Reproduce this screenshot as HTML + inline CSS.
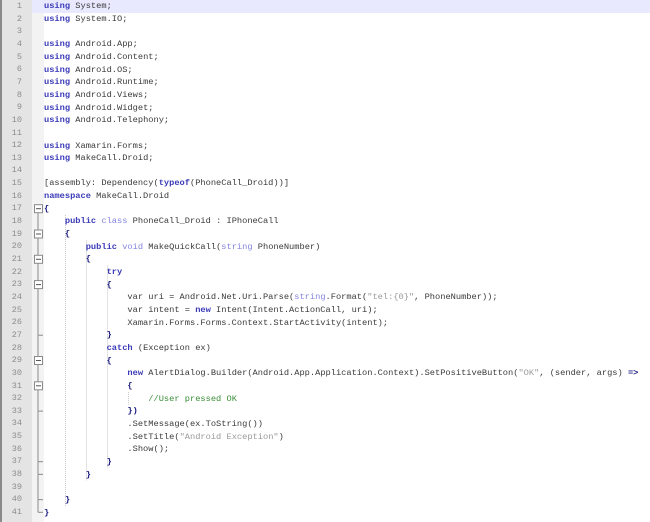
<!DOCTYPE html>
<html><head><meta charset="utf-8"><style>
html,body{margin:0;padding:0;width:650px;height:522px;overflow:hidden;background:#fff;}
#g{position:absolute;left:0;top:0;width:30px;height:522px;background:#e4e4e4;border-left:2px solid #8a8a8a;}
#f{position:absolute;left:32px;top:0;width:12px;height:522px;background:#f3f3f3;}
#hl{position:absolute;left:32px;top:0;width:618px;height:12.65px;background:#e8e8ff;}
.ln{position:absolute;left:2px;width:20px;text-align:right;font:8.5px "Liberation Mono",monospace;color:#8c8c8c;line-height:12.65px;}
pre{position:absolute;left:44px;top:0.3px;margin:0;font:8.7px "Liberation Mono",monospace;line-height:12.65px;color:#3a3a3a;}
.k{color:#3a3ab8;font-weight:bold}
.t{color:#8585e0}
.o{color:#1a1a80;font-weight:bold}
.s{color:#9a9a9a}
.c{color:#3a8f3a}
svg{position:absolute;left:0;top:0}
</style></head><body>
<div id="g"></div><div id="f"></div><div id="hl"></div>
<div id="nums"></div>
<svg width="650" height="522" id="sv"></svg>
<pre><span class="k">using</span> System;
<span class="k">using</span> System.IO;

<span class="k">using</span> Android.App;
<span class="k">using</span> Android.Content;
<span class="k">using</span> Android.OS;
<span class="k">using</span> Android.Runtime;
<span class="k">using</span> Android.Views;
<span class="k">using</span> Android.Widget;
<span class="k">using</span> Android.Telephony;

<span class="k">using</span> Xamarin.Forms;
<span class="k">using</span> MakeCall.Droid;

[assembly: Dependency(<span class="k">typeof</span>(PhoneCall_Droid))]
<span class="k">namespace</span> MakeCall.Droid
<span class="o">{</span>
    <span class="k">public</span> <span class="t">class</span> PhoneCall_Droid : IPhoneCall
    <span class="o">{</span>
        <span class="k">public</span> <span class="t">void</span> MakeQuickCall(<span class="t">string</span> PhoneNumber)
        <span class="o">{</span>
            <span class="k">try</span>
            <span class="o">{</span>
                var uri = Android.Net.Uri.Parse(<span class="t">string</span>.Format(<span class="s">"tel:{0}"</span>, PhoneNumber));
                var intent = <span class="k">new</span> Intent(Intent.ActionCall, uri);
                Xamarin.Forms.Forms.Context.StartActivity(intent);
            <span class="o">}</span>
            <span class="k">catch</span> (Exception ex)
            <span class="o">{</span>
                <span class="k">new</span> AlertDialog.Builder(Android.App.Application.Context).SetPositiveButton(<span class="s">"OK"</span>, (sender, args) <span class="o">=&gt;</span>
                <span class="o">{</span>
                    <span class="c">//User pressed OK</span>
                <span class="o">})</span>
                .SetMessage(ex.ToString())
                .SetTitle(<span class="s">"Android Exception"</span>)
                .Show();
            <span class="o">}</span>
        <span class="o">}</span>

    <span class="o">}</span>
<span class="o">}</span></pre>
<script>
var L=12.65,h='';
for(var i=1;i<=41;i++)h+='<div class="ln" style="top:'+((i-1)*L)+'px">'+i+'</div>';
document.getElementById('nums').innerHTML=h;
var s='',cy=function(n){return (n-1)*L+6.3;};
s+='<line x1="38" y1="'+cy(17)+'" x2="38" y2="'+(cy(41))+'" stroke="#8a8a8a" stroke-width="1"/>';
s+='<line x1="38" y1="'+cy(41)+'" x2="43" y2="'+cy(41)+'" stroke="#8a8a8a"/>';
[27,33,37,38,40].forEach(function(n){s+='<line x1="38" y1="'+cy(n)+'" x2="43" y2="'+cy(n)+'" stroke="#8a8a8a"/>';});
[17,19,21,23,29,31].forEach(function(n){var y=cy(n);s+='<rect x="34.5" y="'+(y-4)+'" width="8" height="8" fill="#fff" stroke="#8a8a8a"/><line x1="36" y1="'+y+'" x2="41" y2="'+y+'" stroke="#555"/>';});
function g(x,a,b){s+='<line x1="'+x+'" y1="'+((a-1)*L)+'" x2="'+x+'" y2="'+(b*L)+'" stroke="#c8c8c8" stroke-dasharray="1,1"/>';}
g(65.5,18,40);g(86.5,20,38);g(107.5,22,37);g(128.5,32,32);
document.getElementById('sv').innerHTML=s;
</script>
</body></html>
